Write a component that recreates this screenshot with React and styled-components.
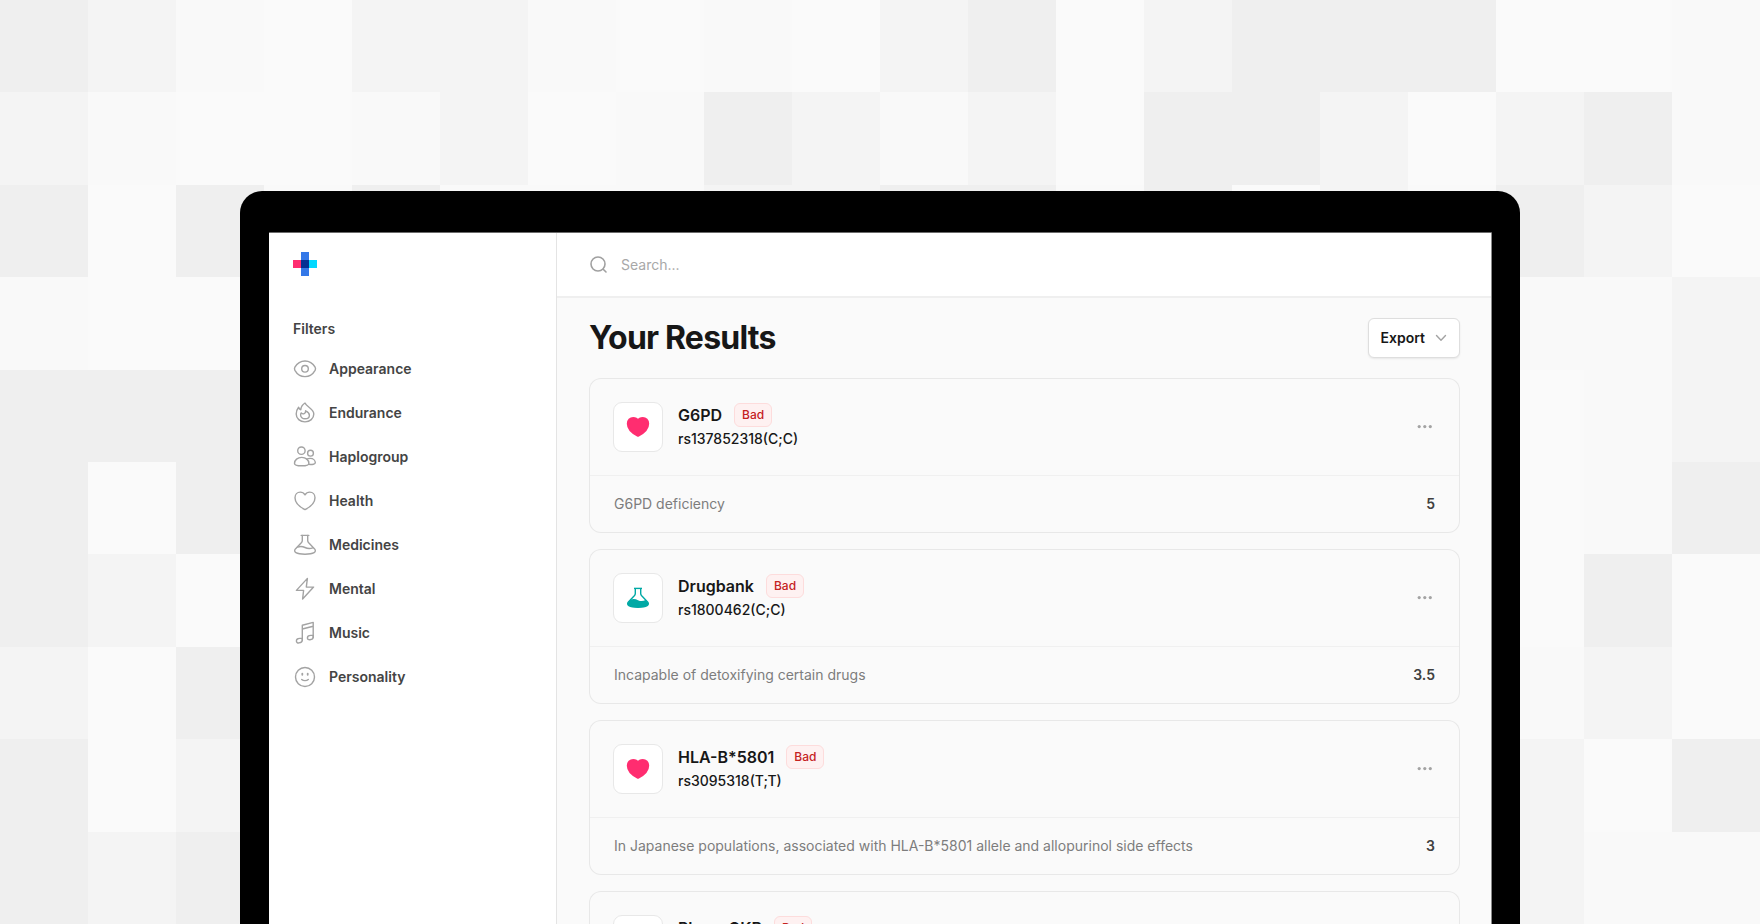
import React from "react";
import styled, { createGlobalStyle } from "styled-components";

const GlobalStyle = createGlobalStyle`
  *, *::before, *::after { box-sizing: border-box; }
  html, body, #root { height: 100%; }
  body {
    margin: 0;
    background: #fafafa;
    color: #171717;
    font-family: Inter, "Liberation Sans", sans-serif;
    font-size: 14px;
    line-height: 20px;
  }
  button, input { font: inherit; }
`;

const Stage = styled.div`
  display: grid;
  height: 100vh;
  overflow: hidden;
  > * { grid-area: 1 / 1; }
`;

const Mosaic = styled.div`
  display: grid;
  grid-template-columns: repeat(20, 1fr);
  grid-template-rows: repeat(10, 1fr);
  height: 100vh;
`;

const tones = { A: "#efefef", B: "#f4f4f4", C: "#f9f9f9", D: "#fafafa" };

const Tile = styled.div`
  background: ${(p) => tones[p.$tone]};
`;

const Device = styled.div`
  width: min(1280px, calc(100% - 32px));
  margin: 191px auto 0;
  padding: 41px 28px 0 29px;
  border-radius: 22px 22px 0 0;
  background: #000;
  display: flex;
`;

const Screen = styled.div`
  flex: 1;
  min-width: 0;
  display: grid;
  grid-template-columns: 288px 1fr;
  border-top: 1px solid #6b6b6b;
  border-right: 1px solid #8a8a8a;
  border-radius: 1px;
  background: #fafafa;
  overflow: hidden;
`;

const Sidebar = styled.aside`
  padding: 0 24px;
  border-right: 1px solid #e4e4e4;
  background: #fff;
`;

const Brand = styled.a`
  display: flex;
  align-items: center;
  height: 62px;
`;

const FilterHeading = styled.h2`
  margin: 24px 0 8px;
  font-size: 14px;
  line-height: 20px;
  font-weight: 600;
  color: #444;
`;

const FilterList = styled.ul`
  margin: 0;
  padding: 0;
  list-style: none;
`;

const FilterLink = styled.a`
  display: flex;
  align-items: center;
  gap: 12px;
  height: 44px;
  font-weight: 600;
  color: #444;
  text-decoration: none;
`;

const LineIcon = styled.svg`
  flex: none;
  width: 24px;
  height: 24px;
  fill: none;
  stroke: #a3a3a3;
  stroke-width: 1.4;
  stroke-linecap: round;
  stroke-linejoin: round;
`;

const Main = styled.main`
  min-width: 0;
`;

const SearchBar = styled.label`
  display: flex;
  align-items: center;
  gap: 12px;
  height: 65px;
  padding: 0 32px;
  border-bottom: 2px solid #efefef;
  background: #fff;
`;

const SearchIcon = styled.svg`
  flex: none;
  width: 20px;
  height: 20px;
  fill: none;
  stroke: #a0a0a0;
  stroke-width: 1.6;
  stroke-linecap: round;
`;

const SearchInput = styled.input`
  flex: 1;
  min-width: 0;
  padding: 0;
  border: 0;
  outline: 0;
  background: none;
  color: #171717;
  &::placeholder { color: #a8a8a8; opacity: 1; }
`;

const Content = styled.div`
  padding: 20px 31px 32px 32px;
`;

const TitleRow = styled.div`
  display: flex;
  align-items: center;
  justify-content: space-between;
  margin-bottom: 20px;
`;

const Title = styled.h1`
  margin: 0;
  font-size: 32px;
  line-height: 40px;
  font-weight: 700;
  letter-spacing: -0.025em;
`;

const ExportButton = styled.button`
  display: flex;
  align-items: center;
  gap: 8px;
  height: 40px;
  padding: 0 10px 0 12px;
  border: 1px solid #dedede;
  border-radius: 6px;
  background: #fff;
  box-shadow: 0 1px 2px rgba(0, 0, 0, 0.08);
  color: #171717;
  font-weight: 600;
`;

const Chevron = styled.svg`
  width: 16px;
  height: 16px;
  fill: none;
  stroke: #a3a3a3;
  stroke-width: 1.4;
  stroke-linecap: round;
  stroke-linejoin: round;
`;

const Cards = styled.div`
  display: flex;
  flex-direction: column;
  gap: 16px;
`;

const Card = styled.article`
  border-radius: 12px;
  box-shadow: inset 0 0 0 1px #e8e8e8;
`;

const CardHead = styled.div`
  display: flex;
  align-items: center;
  gap: 15px;
  padding: 24px 24px 23px;
`;

const IconBox = styled.div`
  flex: none;
  display: grid;
  place-items: center;
  width: 50px;
  height: 50px;
  border: 1px solid #e8e8e8;
  border-radius: 9px;
  background: #fff;
`;

const SolidIcon = styled.svg`
  width: 24px;
  height: 24px;
`;

const Names = styled.div`
  flex: 1;
  min-width: 0;
  align-self: flex-start;
`;

const NameRow = styled.div`
  display: flex;
  align-items: center;
  gap: 12px;
  height: 26px;
`;

const Name = styled.h3`
  margin: 0;
  font-size: 16px;
  line-height: 24px;
  font-weight: 600;
`;

const Badge = styled.span`
  padding: 1px 7px;
  border: 1px solid #fddcdc;
  border-radius: 6px;
  background: #fef1f1;
  color: #c5221f;
  font-size: 12px;
  line-height: 20px;
  font-weight: 500;
`;

const Variant = styled.p`
  margin: 0;
  line-height: 22px;
  font-weight: 500;
`;

const MoreButton = styled.button`
  display: flex;
  padding: 0;
  border: 0;
  background: none;
`;

const CardFoot = styled.div`
  display: flex;
  align-items: center;
  justify-content: space-between;
  height: 58px;
  margin: 0 1px;
  padding: 0 24px 2px;
  border-top: 1px solid #f0f0f0;
`;

const Summary = styled.p`
  margin: 0;
  color: #7d7d7d;
`;

const Score = styled.strong`
  font-weight: 600;
  color: #404040;
`;

const heart =
  "M12 20.6C7.6 18.4 2 14.2 2 8.7C2 5.4 4.3 3.1 7.2 3.1C9.2 3.1 11 4.1 12 5.8C13 4.1 14.8 3.1 16.8 3.1C19.7 3.1 22 5.4 22 8.7C22 14.2 16.4 18.4 12 20.6Z";

const flaskBody =
  "M9.3 2.4V7.4C9.3 8.4 8.9 9.1 8.3 9.8L2.4 15.9C1.3 17.1 1.4 18.8 2.9 19.7C5 20.9 8.5 21.2 12 21.2C15.5 21.2 19 20.9 21.1 19.7C22.6 18.8 22.7 17.1 21.6 15.9L15.7 9.8C15.1 9.1 14.7 8.4 14.7 7.4V2.4";

const filters = [
  {
    label: "Appearance",
    icon: (
      <>
        <path d="M12 4C7.8 4 4.2 6.3 1.9 10.2C1.3 11.3 1.3 12.3 1.9 13.4C4.2 17.4 7.8 19.6 12 19.6C16.2 19.6 19.8 17.4 22.1 13.4C22.7 12.3 22.7 11.3 22.1 10.2C19.8 6.3 16.2 4 12 4Z" />
        <circle cx="12" cy="11.8" r="3.3" />
      </>
    ),
  },
  {
    label: "Endurance",
    icon: (
      <>
        <path d="M12 2C13.6 6 20.8 7.6 20.8 13C20.8 17.5 17 20.9 12 20.9C7 20.9 3.2 17.5 3.2 13C3.2 10.2 4.2 8.1 5.6 6.3C6 7.6 6.6 8.4 7.8 8.7C8 6.1 9.6 3.5 12 2Z" />
        <path d="M12.6 9.8C14.2 10.6 16.4 12 16.4 14.2C16.4 16.3 14.5 17.8 12 17.8C9.5 17.8 7.6 16.3 7.6 14C7.6 13.2 7.8 12.5 8.2 11.9C9.1 12.9 10.2 13.1 11.2 12.7C12.2 12.3 12.7 11.2 12.6 9.8Z" />
      </>
    ),
  },
  {
    label: "Haplogroup",
    icon: (
      <>
        <circle cx="8.4" cy="5.7" r="3.7" />
        <circle cx="17.5" cy="8.2" r="2.9" />
        <path d="M8.7 12.4C4.6 12.4 1.5 15 1.5 18.4C1.5 20.2 4.6 20.8 8.7 20.8C12.8 20.8 15.9 20.2 15.9 18.4C15.9 15 12.8 12.4 8.7 12.4Z" />
        <path d="M13.8 14.1C14.8 13.6 16 13.4 17.2 13.4C20.2 13.4 22.3 15.4 22.3 17.8C22.3 19.2 19.5 19.6 15.7 19.4" />
      </>
    ),
  },
  { label: "Health", icon: <path d={heart} /> },
  {
    label: "Medicines",
    icon: (
      <>
        <path d={flaskBody} />
        <path d="M8.2 2.4H15.8M4.6 14.1C7 13.1 9.4 13.2 12 14.5C14.6 15.8 17 15.9 19.8 14.9" />
      </>
    ),
  },
  {
    label: "Mental",
    icon: <path d="M14.4 1.4L3.4 13.4H10.6L9.6 22L20.6 10.1H13.3L14.4 1.4Z" />,
  },
  {
    label: "Music",
    icon: (
      <>
        <path d="M9.3 19.2V4.2L20.2 1.4V16.4M9.3 8L20.2 5.2" />
        <path d="M9.3 17.4H6.7C4.9 17.4 3.4 18.4 3.4 20C3.4 21.4 4.6 22.1 6 21.9C8 21.7 9.3 20.6 9.3 19.2Z" />
        <path d="M20.2 14.4H17.8C16 14.4 14.4 15.4 14.4 17C14.4 18.3 15.6 18.9 17 18.7C18.9 18.5 20.2 17.6 20.2 16.2Z" />
      </>
    ),
  },
  {
    label: "Personality",
    icon: (
      <>
        <circle cx="12" cy="12" r="9.5" />
        <path d="M9.3 8.6V9.8M14.7 8.6V9.8" strokeWidth="1.8" />
        <path d="M8.7 14.4C10.4 16 13.6 16 15.3 14.4" />
      </>
    ),
  },
];

const results = [
  { name: "G6PD", variant: "rs137852318(C;C)", summary: "G6PD deficiency", score: "5", kind: "heart" },
  { name: "Drugbank", variant: "rs1800462(C;C)", summary: "Incapable of detoxifying certain drugs", score: "3.5", kind: "flask" },
  {
    name: "HLA-B*5801",
    variant: "rs3095318(T;T)",
    summary: "In Japanese populations, associated with HLA-B*5801 allele and allopurinol side effects",
    score: "3",
    kind: "heart",
  },
  { name: "PharmGKB", kind: "flask" },
];

const mosaicRows = [
  "ABCDBBCDCDBADBAAADDC",
  "BCDDCBDCABCBDAABDBAC",
  "ADACACCCBBAACADBCABD",
  "CDDAAAAAAAAAAAAAACCB",
  "AAAAAAAAAAAAAAAAADCB",
  "ADAAAAAAAAAAAAAAADCA",
  "ABDAAAAAAAAAAAAAADAD",
  "BDAAAAAAAAAAAAAAACBD",
  "ADBAAAAAAAAAAAAAABDA",
  "ABAAAAAAAAAAAAAAABCC",
];

function Logo() {
  return (
    <svg width="24" height="24" viewBox="0 0 24 24" shapeRendering="crispEdges" aria-hidden="true">
      <path fill="#ff2d70" d="M0 8h8v8H0z" />
      <path fill="#00d8ff" d="M16 8h8v8h-8z" />
      <path fill="#3478e8" d="M8 0h8v24H8z" />
      <path fill="#052f92" d="M8 8h8v8H8z" />
    </svg>
  );
}

function ResultIcon({ kind }) {
  return (
    <SolidIcon viewBox="0 0 24 24" aria-hidden="true">
      {kind === "heart" ? (
        <path fill="#ff2d70" stroke="#ff2d70" strokeWidth="2.4" strokeLinejoin="round" d={heart} />
      ) : (
        <>
          <path fill="none" stroke="#00a9a5" strokeWidth="1.4" strokeLinejoin="round" d={flaskBody} />
          <path fill="none" stroke="#00a9a5" strokeWidth="1.4" d="M8 2.4H16" />
          <path
            fill="#00a9a5"
            d="M4.2 14C7 12.6 9.4 13 12 14.2C14.6 15.4 17 15.4 19.6 14L21.8 16.3C22.7 17.4 22.4 18.8 21.1 19.7C19 20.9 15.5 21.2 12 21.2C8.5 21.2 5 20.9 2.9 19.7C1.6 18.8 1.3 17.4 2.2 16.3Z"
          />
        </>
      )}
    </SolidIcon>
  );
}

function ResultCard({ result }) {
  return (
    <Card>
      <CardHead>
        <IconBox>
          <ResultIcon kind={result.kind} />
        </IconBox>
        <Names>
          <NameRow>
            <Name>{result.name}</Name>
            <Badge>Bad</Badge>
          </NameRow>
          {result.variant && <Variant>{result.variant}</Variant>}
        </Names>
        <MoreButton type="button" aria-label={`More about ${result.name}`}>
          <svg width="20" height="20" viewBox="0 0 20 20" fill="#a3a3a3" aria-hidden="true">
            <circle cx="3.2" cy="9.6" r="1.6" />
            <circle cx="8.8" cy="9.6" r="1.6" />
            <circle cx="14.3" cy="9.6" r="1.6" />
          </svg>
        </MoreButton>
      </CardHead>
      {result.summary && (
        <CardFoot>
          <Summary>{result.summary}</Summary>
          <Score>{result.score}</Score>
        </CardFoot>
      )}
    </Card>
  );
}

export default function App() {
  return (
    <>
      <GlobalStyle />
      <Stage>
        <Mosaic aria-hidden="true">
          {mosaicRows.flatMap((row, y) => [...row].map((tone, x) => <Tile key={`${y}-${x}`} $tone={tone} />))}
        </Mosaic>
        <Device>
          <Screen>
            <Sidebar>
              <Brand href="#" aria-label="Home">
                <Logo />
              </Brand>
              <nav aria-label="Filters">
                <FilterHeading>Filters</FilterHeading>
                <FilterList>
                  {filters.map((f) => (
                    <li key={f.label}>
                      <FilterLink href="#">
                        <LineIcon viewBox="0 0 24 24" aria-hidden="true">
                          {f.icon}
                        </LineIcon>
                        {f.label}
                      </FilterLink>
                    </li>
                  ))}
                </FilterList>
              </nav>
            </Sidebar>
            <Main>
              <SearchBar>
                <SearchIcon viewBox="0 0 20 20" aria-hidden="true">
                  <circle cx="9" cy="9" r="7" />
                  <path d="M14.2 14.2L17 17" />
                </SearchIcon>
                <SearchInput type="search" placeholder="Search..." aria-label="Search" />
              </SearchBar>
              <Content>
                <TitleRow>
                  <Title>Your Results</Title>
                  <ExportButton type="button">
                    Export
                    <Chevron viewBox="0 0 16 16" aria-hidden="true">
                      <path d="M3.5 5.5L8 10.2L12.5 5.5" />
                    </Chevron>
                  </ExportButton>
                </TitleRow>
                <Cards>
                  {results.map((r) => (
                    <ResultCard key={r.name} result={r} />
                  ))}
                </Cards>
              </Content>
            </Main>
          </Screen>
        </Device>
      </Stage>
    </>
  );
}
